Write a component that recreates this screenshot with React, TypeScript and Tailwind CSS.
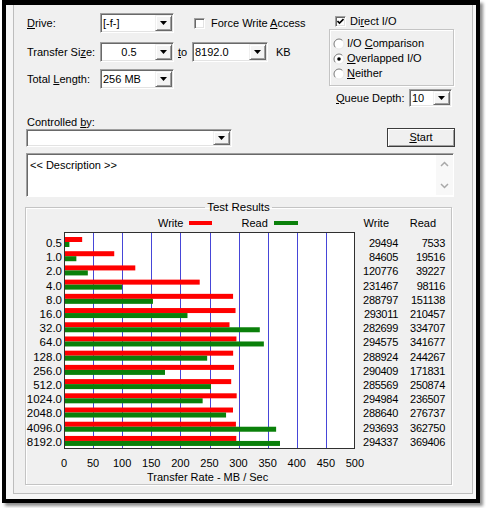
import React from 'react'

const rows = [
  { size: '0.5', w: 29494, r: 7533 },
  { size: '1.0', w: 84605, r: 19516 },
  { size: '2.0', w: 120776, r: 39227 },
  { size: '4.0', w: 231467, r: 98116 },
  { size: '8.0', w: 288797, r: 151138 },
  { size: '16.0', w: 293011, r: 210457 },
  { size: '32.0', w: 282699, r: 334707 },
  { size: '64.0', w: 294575, r: 341677 },
  { size: '128.0', w: 288924, r: 244267 },
  { size: '256.0', w: 290409, r: 171831 },
  { size: '512.0', w: 285569, r: 250874 },
  { size: '1024.0', w: 294984, r: 236507 },
  { size: '2048.0', w: 288640, r: 276737 },
  { size: '4096.0', w: 293693, r: 362750 },
  { size: '8192.0', w: 294337, r: 369406 },
]

const ROW = 14.21
const SCALE = 0.582 // px per MB/s

function Arrow() {
  return (
    <svg width="7" height="4" viewBox="0 0 7 4">
      <polygon points="0,0 7,0 3.5,4" fill="#000" />
    </svg>
  )
}

// sunken combo box with a drop button on the right
function Combo({ text, className, center }: { text: string; className: string; center?: boolean }) {
  return (
    <div
      className={`flex bg-white border border-[#a0a0a0] border-b-white border-r-white shadow-[inset_1px_1px_0_#696969,inset_-1px_-1px_0_#e3e3e3] ${className}`}
    >
      <div className={`flex-1 flex items-center pl-[2px] ${center ? 'justify-center' : ''}`}>{text}</div>
      <div className="w-[17px] my-[1px] mr-[1px] flex items-center justify-center bg-[#f4f4f4] border border-[#f0f0f0] border-b-[#696969] border-r-[#696969] shadow-[inset_1px_1px_0_#fff,inset_-1px_-1px_0_#a0a0a0]">
        <Arrow />
      </div>
    </div>
  )
}

function CheckBox({ checked }: { checked?: boolean }) {
  return (
    <div className="w-[11px] h-[11px] shrink-0 flex items-center justify-center bg-white border border-[#a0a0a0] border-b-white border-r-white shadow-[inset_1px_1px_0_#696969,inset_-1px_-1px_0_#e3e3e3]">
      {checked && (
        <svg width="7" height="7" viewBox="0 0 7 7">
          <polyline points="0.5,3 2.5,5 6.5,1" fill="none" stroke="#000" strokeWidth="1.6" />
        </svg>
      )}
    </div>
  )
}

function Radio({ on }: { on?: boolean }) {
  return (
    <svg width="12" height="12" viewBox="0 0 12 12" className="shrink-0">
      <circle cx="6" cy="6" r="5" fill="#fff" />
      <path d="M2.46 9.54 A5 5 0 0 1 9.54 2.46" fill="none" stroke="#7a7a7a" strokeWidth="1" />
      <path d="M9.54 2.46 A5 5 0 0 1 2.46 9.54" fill="none" stroke="#e8e8e8" strokeWidth="1" />
      {on && <circle cx="6" cy="6" r="1.8" fill="#000" />}
    </svg>
  )
}

function Chevron({ up }: { up?: boolean }) {
  return (
    <svg width="9" height="6" viewBox="0 0 9 6">
      <polyline points={up ? '1,5 4.5,1.5 8,5' : '1,1 4.5,4.5 8,1'} fill="none" stroke="#a8a8a8" strokeWidth="1.5" />
    </svg>
  )
}

function Chart() {
  return (
    <svg width="291" height="217" className="block shrink-0">
      <rect x="0.5" y="0.5" width="290" height="216" fill="#fff" stroke="#303030" />
      {[1, 2, 3, 4, 5, 6, 7, 8, 9].map((i) => (
        <line
          key={i}
          x1={Math.round(i * 29.1) + 0.5}
          x2={Math.round(i * 29.1) + 0.5}
          y1="1"
          y2="216"
          stroke="#4646d8"
          strokeWidth="1"
        />
      ))}
      {rows.map((r, i) => (
        <g key={r.size}>
          <rect x="1" y={5 + i * ROW} width={(r.w / 1000) * SCALE} height="5" fill="#ff0000" />
          <rect x="1" y={10 + i * ROW} width={(r.r / 1000) * SCALE} height="5" fill="#0a800a" />
        </g>
      ))}
    </svg>
  )
}

export default function App() {
  return (
    <div className="w-[486px] h-[508px] bg-white font-['Liberation_Sans',Arial,sans-serif] text-[11px] leading-none text-black overflow-hidden">
      <div className="ml-[2px] w-[478px] h-[503px] border-4 border-t-[5px] border-black bg-[#f6f6f6] shadow-[3px_3px_3px_rgba(0,0,0,0.45)]">
        <div className="ml-[7px] w-[460px] h-[489px] border-x border-b border-[#bdbdbd] bg-[#f0f0f0]">
          {/* Top settings */}
          <div className="flex pt-[8px] pl-[13px]">
            <div className="w-[302px] flex flex-col">
              <div className="flex items-center h-[20px]">
                <span className="w-[73px]">
                  <span className="underline">D</span>rive:
                </span>
                <Combo text="[-f-]" className="w-[74px] h-[20px]" />
                <div className="flex items-center ml-[20px]">
                  <CheckBox />
                  <span className="ml-[6px]">
                    Force Write <span className="underline">A</span>ccess
                  </span>
                </div>
              </div>
              <div className="flex items-center h-[20px] mt-[9px]">
                <span className="w-[73px]">
                  Transfer Si<span className="underline">z</span>e:
                </span>
                <Combo text="0.5" center className="w-[74px] h-[20px]" />
                <span className="w-[14px] ml-[4px]">
                  <span className="underline">t</span>o
                </span>
                <Combo text="8192.0" className="w-[76px] h-[20px]" />
                <span className="ml-[8px]">KB</span>
              </div>
              <div className="flex items-center h-[20px] mt-[7px]">
                <span className="w-[73px]">
                  Total <span className="underline">L</span>ength:
                </span>
                <Combo text="256 MB" className="w-[74px] h-[20px]" />
              </div>
            </div>
            <div className="w-[125px] flex flex-col">
              <div className="flex items-center h-[16px] pl-[6px]">
                <CheckBox checked />
                <span className="ml-[4px]">
                  Di<span className="underline">r</span>ect I/O
                </span>
              </div>
              <fieldset className="h-[57px] border border-[#c4c4c4] shadow-[inset_1px_1px_0_#fff,1px_1px_0_#fff] pl-[3px] pt-[6px]">
                <div className="flex items-center h-[15px]">
                  <Radio />
                  <span className="ml-[2px]">
                    I/O <span className="underline">C</span>omparison
                  </span>
                </div>
                <div className="flex items-center h-[15px]">
                  <Radio on />
                  <span className="ml-[2px]">
                    <span className="underline">O</span>verlapped I/O
                  </span>
                </div>
                <div className="flex items-center h-[15px]">
                  <Radio />
                  <span className="ml-[2px]">
                    <span className="underline">N</span>either
                  </span>
                </div>
              </fieldset>
              <div className="flex items-center mt-[3px] pl-[7px]">
                <span className="w-[73px]">
                  <span className="underline">Q</span>ueue Depth:
                </span>
                <Combo text="10" className="w-[43px] h-[18px]" />
              </div>
            </div>
          </div>

          {/* Controlled by / Start / description */}
          <div className="mt-[10px] pl-[13px] h-[11px]">
            Controlled <span className="underline">b</span>y:
          </div>
          <div className="flex items-end h-[19px] pl-[12px]">
            <Combo text="" className="w-[206px] h-[18px]" />
            <button className="ml-[155px] w-[68px] h-[19px] bg-[#f0f0f0] border border-[#3c3c3c] shadow-[inset_1px_1px_0_#fff,inset_-1px_-1px_0_#a0a0a0]">
              <span className="underline">S</span>tart
            </button>
          </div>
          <div className="ml-[12px] mt-[6px] w-[428px] h-[44px] flex bg-white border border-[#a0a0a0] border-b-white border-r-white shadow-[inset_1px_1px_0_#696969]">
            <div className="flex-1 pl-[3px] pt-[6px]">&lt;&lt; Description &gt;&gt;</div>
            <div className="w-[17px] my-[1px] bg-[#f8f8f8] flex flex-col justify-between items-center py-[6px]">
              <Chevron up />
              <Chevron />
            </div>
          </div>

          {/* Test results */}
          <fieldset className="ml-[11px] mt-[4px] w-[427px] h-[284px] border border-[#c4c4c4] shadow-[inset_1px_1px_0_#fff,1px_1px_0_#fff]">
            <legend className="mx-auto px-[2px] text-[11.5px] leading-[13px]">Test Results</legend>
            <div className="flex items-center h-[10px] mt-[4px]">
              <div className="w-[38px]" />
              <div className="w-[291px] flex items-center pl-[94px]">
                <span>Write</span>
                <span className="ml-[6px] w-[23px] h-[4px] bg-[#ff0000]" />
                <span className="ml-[29px]">Read</span>
                <span className="ml-[6px] w-[24px] h-[4px] bg-[#0a800a]" />
              </div>
              <div className="w-[43px] text-right pr-[9px]">Write</div>
              <div className="w-[47px] text-right pr-[9px]">Read</div>
            </div>
            <div className="flex mt-[4px]">
              <div className="w-[38px] pr-[2px] pt-[4px] flex flex-col text-right text-[11.5px]">
                {rows.map((r) => (
                  <div key={r.size} className="h-[14.21px] leading-[14.21px]">
                    {r.size}
                  </div>
                ))}
              </div>
              <Chart />
              <div className="w-[43px] pt-[4px] flex flex-col text-right tracking-[-0.3px]">
                {rows.map((r) => (
                  <div key={r.size} className="h-[14.21px] leading-[14.21px]">
                    {r.w}
                  </div>
                ))}
              </div>
              <div className="w-[47px] pt-[4px] flex flex-col text-right tracking-[-0.3px]">
                {rows.map((r) => (
                  <div key={r.size} className="h-[14.21px] leading-[14.21px]">
                    {r.r}
                  </div>
                ))}
              </div>
            </div>
            <div className="flex ml-[23.45px] mt-[8px] h-[12px] items-center">
              {[0, 50, 100, 150, 200, 250, 300, 350, 400, 450, 500].map((v) => (
                <div key={v} className="w-[29.1px] text-center">
                  {v}
                </div>
              ))}
            </div>
            <div className="mt-[2px] pl-[121px] h-[12px] flex items-center">Transfer Rate - MB / Sec</div>
          </fieldset>
        </div>
      </div>
    </div>
  )
}
